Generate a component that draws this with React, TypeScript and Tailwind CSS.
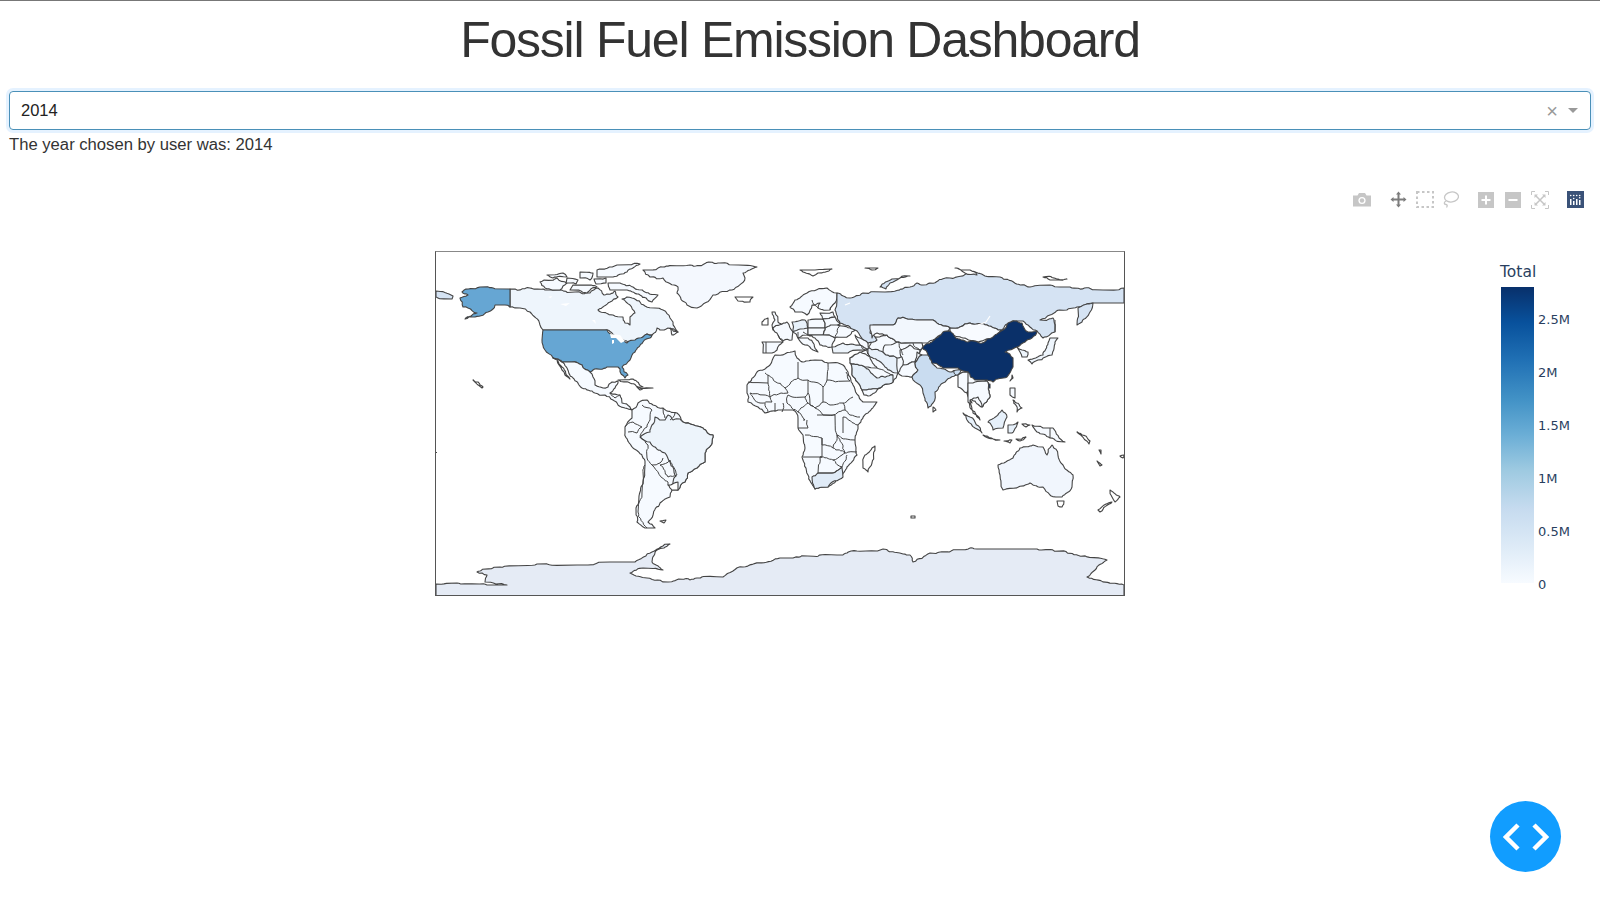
const LAND = "#f6faff";
const RUSSIA = "#d5e3f3";

// [fill, points] in page pixels, the map's viewBox uses the same numbers
const shapes: [string, string][] = [
  // base land under the small countries
  [LAND, "850,358 868,348 872,338 887,335 897,342 922,348 915,362 918,370 912,377 898,373 893,382 880,388 862,390 852,375"],
  [LAND, "855,335 868,343 870,350 860,345"],
  [LAND, "958,375 968,372 987,381 990,397 982,407 972,400 968,388"],
  // north america
  ["#eef5fc", "510,289 530,288 545,290 560,290 575,292 590,293 598,288 604,295 615,291 618,297 610,302 598,310 613,315 623,317 625,323 630,325 630,317 635,313 630,305 622,299 632,298 645,306 655,308 663,310 670,318 673,322 678,332 668,328 660,330 657,328 652,335 647,334 640,340 632,342 620,340 612,333 605,330 543,330 540,325 530,312 520,308 510,307"],
  ["#66a6d3", "543,330 607,330 613,335 627,343 635,340 643,337 647,334 652,335 650,338 643,342 635,352 630,360 622,367 628,375 625,378 620,369 618,367 607,367 593,370 590,372 582,365 572,362 562,362 553,358 545,350 542,340"],
  ["#66a6d3", "510,289 510,307 505,305 495,305 488,312 473,317 465,319 477,313 468,308 463,307 460,298 468,295 462,292 480,287"],
  [RUSSIA, "436,291 453,296 452,299 436,297"],
  [LAND, "608,283 620,283 633,287 645,292 658,295 652,302 640,295 627,290 610,290"],
  [LAND, "540,282 557,278 567,283 560,290 545,288"],
  [LAND, "597,270 617,265 640,264 627,272 613,277 597,277"],
  [LAND, "547,275 563,273 567,277 553,278"],
  [LAND, "580,272 593,273 590,280 580,278"],
  [LAND, "573,285 597,287 587,293 570,290"],
  [LAND, "567,278 578,280 576,284 566,283"],
  [LAND, "594,279 606,278 606,283 596,284"],
  [LAND, "670,328 678,332 672,335"],
  ["#f4f8fe", "643,270 663,267 690,265 720,263 757,267 743,273 745,278 732,290 713,295 697,308 687,305 677,293 678,287 663,278 650,277"],
  ["#ffffff", "735,297 753,297 750,302 738,301"],
  [LAND, "553,358 562,362 572,362 582,365 590,372 593,377 595,385 603,388 608,387 612,382 618,381 615,388 610,393 620,395 622,403 630,407 632,410 625,408 613,400 605,395 595,393 582,388 573,378 567,368 558,359"],
  [LAND, "557,360 562,367 570,379 565,375 559,365"],
  ["#ffffff", "618,380 633,379 643,387 630,383"],
  ["#ffffff", "637,387 653,388 640,390"],
  ["#ffffff", "473,380 478,382 483,387 482,388 476,383"],
  // south america
  [LAND, "638,403 647,400 653,405 663,408 677,413 683,422 703,428 713,435 712,443 705,453 705,462 697,468 688,473 685,482 678,490 672,490 670,497 660,503 653,515 648,522 655,528 645,528 637,522 636,508 640,492 645,465 643,458 633,448 625,433 625,427 632,418 632,410"],
  ["#edf4fb", "655,417 665,420 668,415 673,420 680,419 683,422 703,428 713,435 712,443 705,453 705,462 697,468 688,473 685,482 678,490 672,488 676,476 670,462 665,453 655,447 650,442 640,437 650,432 652,425"],
  ["#ffffff", "668,485 678,482 678,490 672,490"],
  ["#ffffff", "660,521 666,520 664,523"],
  // africa
  [LAND, "775,355 795,351 797,358 803,362 815,360 828,363 843,365 848,372 853,385 863,402 877,402 868,413 858,425 855,440 857,455 847,467 840,477 828,487 815,489 808,475 802,457 805,448 803,435 798,428 798,418 793,410 778,410 765,413 758,407 748,402 747,393 747,385 757,372 770,365"],
  ["#e0ebf7", "812,477 818,473 832,473 842,467 843,477 828,487 815,489"],
  ["#ffffff", "875,446 872,463 868,472 863,468 865,455 870,451"],
  // europe
  [LAND, "790,307 795,300 807,293 827,288 837,293 835,303 830,310 818,308 820,303 812,305 807,315 802,312 795,312"],
  ["#ffffff", "762,322 768,318 768,325 762,325"],
  [LAND, "772,312 775,312 778,322 783,327 773,330 772,325 775,320"],
  [LAND, "762,342 783,342 777,350 772,353 763,353"],
  [LAND, "773,328 787,322 793,332 792,340 783,341 778,335"],
  ["#e8f1fa", "792,322 805,320 808,328 803,332 793,332"],
  [LAND, "808,320 823,319 825,328 808,328"],
  [LAND, "793,332 808,328 808,335 798,338"],
  [LAND, "798,338 808,338 818,352 813,350 805,345"],
  [LAND, "820,313 833,312 835,317 823,319"],
  [LAND, "823,319 835,317 840,323 825,328"],
  [LAND, "825,328 837,325 855,330 850,335 835,338 823,335"],
  [LAND, "808,328 825,328 823,335 808,335"],
  [LAND, "808,335 823,335 835,338 832,347 820,345 815,338"],
  ["#edf4fb", "832,347 843,343 860,345 868,350 848,353 833,353"],
  // asia
  [RUSSIA, "837,293 850,298 863,293 885,292 910,287 917,283 923,285 950,278 970,272 985,276 1000,277 1030,287 1050,285 1070,287 1103,290 1124,288 1124,303 1093,303 1077,307 1050,315 1040,320 1053,318 1055,332 1043,338 1037,331 1030,327 1023,321 1012,321 1002,330 987,325 970,323 950,328 933,320 917,320 898,318 893,325 873,325 870,333 877,340 868,343 855,330 840,323 835,310"],
  [RUSSIA, "880,287 892,279 910,276 890,283 886,289"],
  ["#ffffff", "800,270 815,270 832,269 818,273 813,276"],
  ["#ffffff", "865,268 878,268 872,270"],
  ["#ffffff", "955,268 970,270 977,275 965,273"],
  ["#ffffff", "1043,277 1067,279 1050,280"],
  ["#f2f7fd", "870,325 893,325 898,318 917,320 933,320 950,328 947,332 943,335 922,343 913,343 897,342 887,335 877,333 872,338"],
  ["#f8fbff", "950,328 970,323 987,325 1002,330 995,337 978,342 963,338 950,333"],
  ["#e7f0fa", "868,348 883,352 897,358 898,373 885,367 877,360 870,357"],
  ["#e5eff9", "850,363 865,367 877,378 893,375 893,382 880,388 862,390 852,375"],
  [LAND, "850,358 860,352 870,357 877,368 865,367 850,363"],
  [LAND, "862,390 880,388 868,396 864,395"],
  [LAND, "897,342 913,343 922,343 923,348 913,352 903,355 897,358 883,352 885,345"],
  [LAND, "900,350 910,345 920,350 915,362 903,365"],
  [LAND, "898,373 903,365 915,362 917,352 922,355 915,363 918,370 912,377 902,376"],
  ["#c9dcf0", "922,355 928,355 932,363 937,368 950,372 957,370 962,368 958,375 950,378 943,383 935,392 933,403 928,408 923,393 920,385 912,377 918,370 915,363"],
  ["#ffffff", "933,407 936,410 933,412"],
  ["#0a3069", "922,348 932,342 943,332 950,331 955,337 968,342 982,343 993,337 1003,330 1008,323 1015,321 1022,323 1028,332 1037,331 1032,338 1025,342 1017,347 1005,352 1013,358 1013,367 1007,377 993,382 987,380 975,380 968,372 958,368 943,368 932,363 928,355"],
  ["#0a3069", "986,384 990,384 990,388 986,388"],
  [LAND, "958,375 968,372 968,388 972,403 967,393 958,387"],
  [LAND, "968,383 987,381 990,397 982,407 978,397 970,400 972,410 980,420 973,413 968,402"],
  ["#e6f0fa", "963,413 970,417 982,433 975,428 967,420"],
  ["#e6f0fa", "983,435 1000,440 988,438"],
  ["#e6f0fa", "988,422 1002,410 1007,417 1003,428 993,430"],
  ["#e6f0fa", "1008,425 1018,422 1012,433 1008,433"],
  [LAND, "1010,388 1015,388 1015,398 1010,395"],
  [LAND, "1013,400 1022,408 1017,412"],
  [LAND, "1032,425 1043,428 1053,428 1065,442 1050,438 1037,432"],
  ["#ffffff", "1004,441 1012,440 1010,443"],
  ["#ffffff", "1016,439 1026,437 1020,441"],
  ["#ffffff", "1022,424 1030,425 1026,427"],
  ["#ffffff", "1012,375 1013,378 1010,381"],
  ["#eef5fc", "1028,360 1043,355 1048,343 1050,338 1058,338 1055,342 1052,355 1038,360 1032,364"],
  ["#eef5fc", "1017,347 1022,350 1028,352 1027,357 1022,357 1020,352"],
  [RUSSIA, "1077,325 1078,308 1093,303 1090,312 1082,322"],
  // oceania
  ["#f1f6fd", "998,465 1013,458 1020,448 1033,445 1043,447 1047,455 1052,445 1063,465 1073,475 1072,487 1062,497 1050,495 1043,487 1030,483 1003,490 1000,475"],
  ["#ffffff", "1057,501 1064,501 1062,507 1058,506"],
  ["#ffffff", "1110,490 1120,497 1115,502 1112,497"],
  ["#ffffff", "1112,502 1100,512 1098,510 1106,504"],
  ["#ffffff", "1097,461 1102,465 1100,466"],
  ["#ffffff", "1120,456 1124,455 1123,458"],
  ["#ffffff", "1099,450 1101,450 1101,454"],
  ["#ffffff", "1077,432 1090,441 1089,444"],
  ["#ffffff", "911,516 915,516 915,518 911,518"],
  // antarctica
  ["#e5ebf5", "436,584 457,583 487,585 507,585 485,582 487,575 477,572 500,567 537,564 577,565 588,565 610,562 635,562 652,552 670,544 657,550 652,562 663,570 643,568 630,573 647,578 668,582 697,578 723,577 743,567 780,558 790,558 837,555 883,549 910,555 913,562 930,553 977,549 1037,549 1107,560 1095,570 1087,577 1124,585 1124,596 436,596"],
];

// country borders, open lines
const borders = [
  "642,405 652,410 650,420 647,427 640,436",
  "625,427 633,422 642,427 637,433 628,432",
  "640,437 648,445 647,458 652,465 660,463 663,458",
  "660,465 670,460 677,475 668,477 660,465",
  "645,465 642,492 638,512 647,528",
  "652,465 668,482 668,485",
  "663,408 665,418",
  "670,420 675,413",
  "610,393 615,398 620,395",
  "765,373 785,388 798,378 798,362",
  "748,382 768,383 768,375",
  "768,383 770,397 750,393",
  "770,397 788,393 785,388",
  "798,378 808,380 808,393 805,397 788,395",
  "808,380 823,387 823,402 815,408 810,405 808,393",
  "828,363 827,380 850,381",
  "827,380 823,387",
  "823,402 830,405 843,403 853,397",
  "845,410 843,403",
  "845,410 850,415 860,417",
  "815,408 823,415 837,413 845,410",
  "817,415 835,415 837,435 833,448 822,445 822,438 805,435",
  "837,435 855,440",
  "857,452 845,453 837,435",
  "843,417 858,425",
  "843,417 843,433",
  "822,438 822,457 803,457",
  "822,457 820,457 818,473",
  "820,457 833,460 842,467 832,473 818,473",
  "833,448 845,453 842,455 833,460",
  "842,467 847,455",
  "788,395 787,403 798,412",
  "808,403 798,412 805,420 803,420",
  "805,397 808,403 815,408",
  "798,428 808,428 807,420",
  "750,393 760,403 772,402 770,397",
  "765,403 768,412",
  "775,403 775,412",
  "783,403 782,412",
  "766,342 766,353",
  "783,342 778,335",
  "798,332 798,338",
  "803,332 808,335",
  "840,323 835,338",
  "830,310 835,303",
  "818,308 812,300",
  "860,345 870,357",
  "850,381 846,372",
  "877,368 893,375",
  "898,342 903,355",
  "913,343 920,350",
  "953,370 956,376",
  "1050,428 1050,438",
  "1055,320 1055,332",
];

type Pt = [number, number];

// same edge gives the same wiggle, so neighbours stay glued together
function wiggle(a: Pt, b: Pt): Pt[] {
  const dx = b[0] - a[0];
  const dy = b[1] - a[1];
  const len = Math.hypot(dx, dy);
  if (len < 3 || Math.abs(dx) < 0.5 || Math.abs(dy) < 0.5) return [b];
  const [p, q] = a[0] < b[0] ? [a, b] : [b, a];
  const s = Math.sin(p[0] * 12.9 + p[1] * 78.2 + q[0] * 37.7 + q[1] * 11.3) * 43758;
  const h = (s - Math.floor(s) - 0.5) * Math.min(len * 0.3, 3);
  const nx = -(q[1] - p[1]) / len;
  const ny = (q[0] - p[0]) / len;
  const m: Pt = [(a[0] + b[0]) / 2 + nx * h, (a[1] + b[1]) / 2 + ny * h];
  return [...wiggle(a, m), ...wiggle(m, b)];
}

function rough(pts: string, closed: boolean) {
  const list = pts.split(" ").map((p) => p.split(",").map(Number) as Pt);
  const out: Pt[] = [list[0]];
  const edges = closed ? list.length : list.length - 1;
  for (let i = 0; i < edges; i++) {
    out.push(...wiggle(list[i], list[(i + 1) % list.length]));
  }
  return out.map((p) => `${p[0].toFixed(1)},${p[1].toFixed(1)}`).join(" ");
}

const MapChart = () => (
  <div className="w-[690px] h-[345px] border border-[#555] border-t-[#888]">
    <svg viewBox="436 252 688 343" width="688" height="343" className="block">
      {shapes.map(([fill, pts], i) => (
        <polygon key={i} points={rough(pts, true)} fill={fill} stroke="#444" strokeWidth="1.100" strokeLinejoin="round" />
      ))}
      {borders.map((pts, i) => (
        <polyline key={i} points={rough(pts, false)} fill="none" stroke="#444" strokeWidth="1" strokeLinejoin="round" />
      ))}
      {/* lakes */}
      <polygon points="610,334 620,335 625,341 621,343 616,338 611,338" fill="#ffffff" />
      <polygon points="612,340 614,340 614,343 612,344" fill="#ffffff" />
      <polygon points="548,297 552,296 551,298" fill="#ffffff" />
      <polygon points="560,304 570,303 566,306" fill="#ffffff" />
      <polygon points="592,320 595,320 596,324" fill="#ffffff" />
      <polyline points="978,325 986,322 990,316" fill="none" stroke="#ffffff" strokeWidth="1.200" />
      <polyline points="845,305 850,303" fill="none" stroke="#ffffff" strokeWidth="1.200" />
      <rect x="434" y="452" width="3" height="1" fill="#444" />
    </svg>
  </div>
);

const ModeBar = () => (
  <div className="absolute right-[16px] top-[34px] flex items-center h-[17px]">
    {/* camera */}
    <svg width="18" height="17" viewBox="0 0 18 17" className="mr-[19px]">
      <path d="M0 4.5h4.5L6 2h6l1.5 2.500H18V15.500H0Z" fill="#c6c6c6" />
      <circle cx="9" cy="9.500" r="3.600" fill="#fff" />
      <circle cx="9" cy="9.500" r="2.200" fill="#c6c6c6" />
    </svg>
    {/* pan */}
    <svg width="17" height="17" viewBox="0 0 17 17" className="mr-[9px]">
      <path d="M8.500 0.500L11 3.500H9.500V7.500H13.500V6L16.500 8.500L13.500 11V9.500H9.500V13.500H11L8.500 16.500L6 13.500H7.500V9.500H3.500V11L0.500 8.500L3.500 6V7.500H7.500V3.500H6Z" fill="#7c7c7c" />
    </svg>
    {/* box select */}
    <svg width="18" height="17" viewBox="0 0 18 17" className="mr-[8px]">
      <rect x="1" y="1" width="16" height="15" fill="none" stroke="#c6c6c6" strokeWidth="2" strokeDasharray="2.500 2.500" />
    </svg>
    {/* lasso */}
    <svg width="17" height="17" viewBox="0 0 17 17" className="mr-[19px]">
      <ellipse cx="9.500" cy="6" rx="7" ry="5" fill="none" stroke="#c6c6c6" strokeWidth="1.300" transform="rotate(-8 9.500 6)" />
      <path d="M4 10c-2.500 1-2 3.500 0 3.500c1.500 0 1.500 1.500 .5 3" fill="none" stroke="#c6c6c6" strokeWidth="1.300" />
    </svg>
    {/* zoom in */}
    <svg width="16" height="16" viewBox="0 0 16 16" className="mr-[11px]">
      <rect width="16" height="16" fill="#c6c6c6" />
      <path d="M7 3.500h2V7h3.500v2H9v3.500H7V9H3.500V7H7Z" fill="#fff" />
    </svg>
    {/* zoom out */}
    <svg width="16" height="16" viewBox="0 0 16 16" className="mr-[10px]">
      <rect width="16" height="16" fill="#c6c6c6" />
      <rect x="3.500" y="7" width="9" height="2" fill="#fff" />
    </svg>
    {/* autoscale */}
    <svg width="18" height="18" viewBox="0 0 18 18" className="mr-[18px]">
      <path d="M0.500 4V0.500H4M14 0.500H17.500V4M17.500 14V17.500H14M4 17.500H0.500V14" fill="none" stroke="#c6c6c6" strokeWidth="1" />
      <path d="M4.500 4.500L13.500 13.500M13.500 4.500L4.500 13.500" stroke="#c6c6c6" strokeWidth="1.500" />
      <path d="M3.500 3.500h3.500L3.500 7ZM14.500 3.500v3.500L11 3.500ZM14.500 14.500h-3.500L14.500 11ZM3.500 14.500v-3.500L7 14.500Z" fill="#c6c6c6" />
    </svg>
    {/* plotly */}
    <svg width="17" height="17" viewBox="0 0 17 17">
      <rect width="17" height="17" fill="#3a5278" />
      <g fill="#fff">
        <rect x="3" y="8" width="1.500" height="6" />
        <rect x="6" y="10" width="1.500" height="4" />
        <rect x="9" y="8" width="1.500" height="6" />
        <rect x="12" y="9" width="1.500" height="5" />
        <circle cx="3.700" cy="4.500" r=".8" />
        <circle cx="6.700" cy="4.500" r=".8" />
        <circle cx="9.700" cy="4.500" r=".8" />
        <circle cx="12.700" cy="4.500" r=".8" />
        <circle cx="6.700" cy="7.500" r=".8" />
        <circle cx="12.700" cy="6.800" r=".8" />
      </g>
    </svg>
  </div>
);

const ticks = ["2.5M", "2M", "1.5M", "1M", "0.5M", "0"];

const ColorBar = () => (
  <div className="w-[99px] font-['DejaVu_Sans',sans-serif] text-[#2a3f5f]">
    <div className="text-[15.500px] leading-[18px] h-[36px] pt-[12px] -ml-[1px]">Total</div>
    <div className="flex">
      <div className="w-[33px] h-[296px] bg-[linear-gradient(to_bottom,#08306b_0%,#08519c_12%,#2171b5_25%,#4292c6_38%,#6baed6_50%,#9ecae1_62%,#c6dbef_75%,#deebf7_88%,#f7fbff_100%)]" />
      <div className="flex flex-col pl-[4px] pt-[24px] gap-[35px] text-[13px] leading-[18px]">
        {ticks.map((t) => (
          <div key={t}>{t}</div>
        ))}
      </div>
    </div>
  </div>
);

export default function App() {
  return (
    <div className="relative h-screen overflow-hidden bg-white border-t border-[#777] font-['Liberation_Sans',Arial,sans-serif] text-[#333]">
      <h1 className="text-center text-[50px] leading-[78px] tracking-[-1.250px] font-normal">
        Fossil Fuel Emission Dashboard
      </h1>

      <div className="mx-[9px] mt-[12px] h-[39px] flex items-center rounded-[4px] border border-[#4a90b8] shadow-[0_0_0_3px_rgba(0,126,255,0.1)] pl-[11px] pr-[12px]">
        <span className="flex-1 text-[16.500px] text-[#222]">2014</span>
        <span className="text-[#999] text-[20px] leading-none mr-[10px]">×</span>
        <span className="w-0 h-0 border-x-[5px] border-x-transparent border-t-[5px] border-t-[#999]" />
      </div>

      <p className="ml-[9px] mt-[3px] h-[24px] text-[16.650px] leading-[24px]">
        The year chosen by user was: 2014
      </p>

      <div className="relative h-[500px] pt-[94px] pl-[435px] flex justify-between">
        <ModeBar />
        <MapChart />
        <ColorBar />
      </div>

      <button
        type="button"
        className="absolute right-[39px] bottom-[39px] w-[71px] h-[71px] rounded-full bg-[#119dff] flex items-center justify-center"
      >
        <svg width="46" height="28" viewBox="0 0 46 28" fill="none" stroke="#fff" strokeWidth="4.500">
          <path d="M15 2L3 14L15 26" />
          <path d="M31 2L43 14L31 26" />
        </svg>
      </button>
    </div>
  );
}
